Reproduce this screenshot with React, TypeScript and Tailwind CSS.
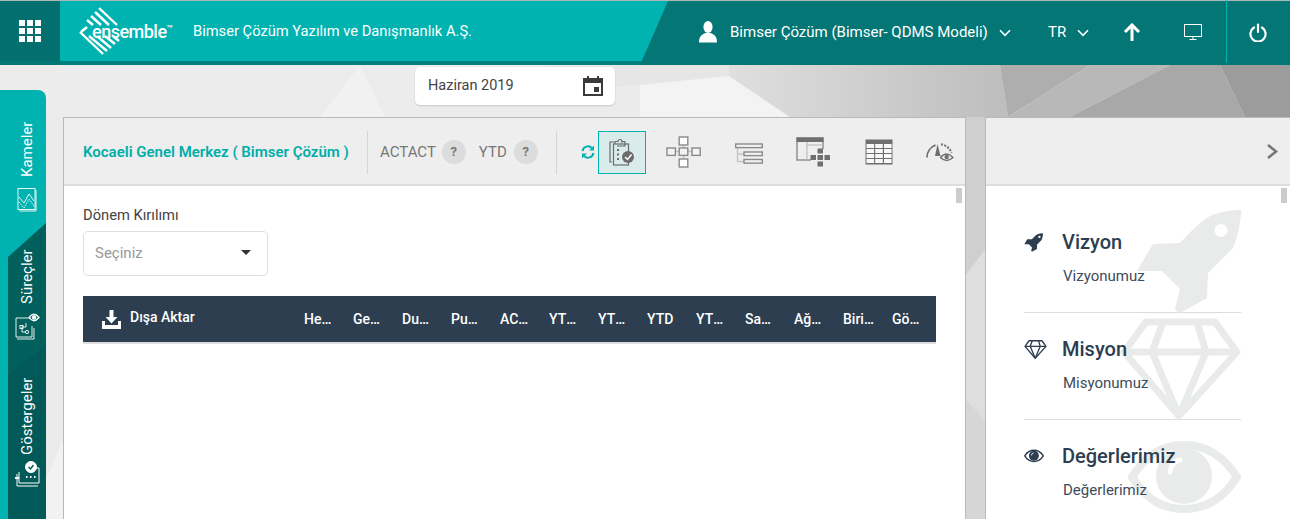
const columns = ["Hedef", "Gerçekleşen", "Durum", "Puan", "ACTACT", "YTD Hedef", "YTD Gerçek", "YTD", "YTD Puan", "Sahip", "Ağırlık", "Birim", "Gösterge"]

function Background() {
  return (
    <svg className="absolute inset-0" width="1290" height="519" viewBox="0 0 1290 519">
      <defs>
        <linearGradient id="mid" x1="0" y1="0" x2="1" y2="0">
          <stop offset="0" stopColor="#dfdfdf" />
          <stop offset="1" stopColor="#bdbdbd" />
        </linearGradient>
      </defs>
      <rect width="1290" height="519" fill="#ebebeb" />
      <polygon points="0,65 640,65 640,85 330,117 0,117" fill="#ececec" />
      <polygon points="320,117 360,65 385,117" fill="#f1f1f1" />
      <polygon points="550,65 729,65 729,76 640,85 560,90" fill="#e6e6e6" />
      <polygon points="640,85 729,76 790,117 640,117" fill="#f3f3f3" />
      <polygon points="729,65 1000,65 1008,117 790,117 729,76" fill="url(#mid)" />
      <polygon points="1000,65 1090,65 1008,117" fill="#aeaeae" />
      <polygon points="1090,65 1170,65 1070,117 1008,117" fill="#b8b8b8" />
      <polygon points="1170,65 1220,65 1245,117 1070,117" fill="#a8a8a8" />
      <polygon points="1220,65 1290,65 1290,117 1245,117" fill="#9c9c9c" />
      <polygon points="966,117 985,117 985,250 966,275" fill="#cfcfcf" />
      <polygon points="966,275 985,250 985,420 966,400" fill="#dedede" />
      <polygon points="966,400 985,420 985,519 966,519" fill="#d6d6d6" />
      <polygon points="46,480 63,440 63,519 46,519" fill="#f2f2f2" />
    </svg>
  )
}

function EnsembleLogo() {
  return (
    <div className="relative w-[94px] h-[48px]">
      <svg width="60" height="48" viewBox="0 0 60 48" className="absolute left-0 top-0" stroke="#ffffff" strokeWidth="2.4">
        <line x1="8" y1="13" x2="14" y2="18" />
        <line x1="12" y1="9" x2="22" y2="18" />
        <line x1="16" y1="5" x2="30" y2="18" />
        <line x1="20" y1="1" x2="38" y2="18" />
        <line x1="2" y1="25" x2="8" y2="20" />
        <line x1="1" y1="25" x2="24" y2="47" />
        <line x1="10" y1="29" x2="28" y2="44" />
        <line x1="18" y1="29" x2="32" y2="41" />
        <line x1="26" y1="29" x2="36" y2="37" />
        <line x1="34" y1="29" x2="40" y2="34" />
      </svg>
      <div className="absolute left-[13px] top-[12px] text-white font-medium text-[18px] leading-[20px] tracking-[-0.5px] whitespace-nowrap">
        ensemble<span className="text-[10px] align-[6px] tracking-normal">™</span>
      </div>
    </div>
  )
}

function Chevron({ className }: { className?: string }) {
  return (
    <svg className={className} width="12" height="8" viewBox="0 0 12 8" fill="none" stroke="#ffffff" strokeWidth="1.6">
      <path d="M1 1.2 L6 6.4 L11 1.2" />
    </svg>
  )
}

function TopBar() {
  return (
    <header className="relative h-[65px] shrink-0 border-t border-[#a9b8b8] bg-[#037675] flex text-white">
      <div className="w-[60px] h-[60px] shrink-0 bg-[#03706f] flex items-center justify-center">
        <div className="grid grid-cols-[6px_6px_6px] gap-[2px] w-[22px]">
          {[0, 1, 2, 3, 4, 5, 6, 7, 8].map((i) => (
            <div key={i} className="w-[6px] h-[6px] bg-white" />
          ))}
        </div>
      </div>
      <div className="w-[608px] h-[64px] shrink-0 bg-[#03807e] [clip-path:polygon(0_0,100%_0,95.4%_100%,0_100%)]">
        <div className="h-[60px] bg-[#00b3b0] flex items-center pl-[19px]">
          <EnsembleLogo />
          <span className="ml-[20px] text-[14.7px] font-normal whitespace-nowrap">Bimser Çözüm Yazılım ve Danışmanlık A.Ş.</span>
        </div>
      </div>
      <div className="flex-1 min-w-0 flex items-center pl-[31px] pb-[2px]">
        <svg className="shrink-0" width="18" height="22" viewBox="0 0 18 22" fill="#ffffff">
          <ellipse cx="9" cy="6" rx="4.6" ry="6" />
          <path d="M0 21.5 C0 15 3 13.5 6.5 12 L11.5 12 C15 13.5 18 15 18 21.5 Z" />
        </svg>
        <span className="ml-[13px] w-[257px] shrink-0 text-[15px] font-normal whitespace-nowrap">Bimser Çözüm (Bimser- QDMS Modeli)</span>
        <Chevron className="ml-[12px] mt-[1px] shrink-0" />
        <span className="ml-[37px] w-[18px] text-[15px] font-normal">TR</span>
        <Chevron className="ml-[11px] mt-[1px] shrink-0" />
        <svg className="ml-[34px] shrink-0" width="18" height="18" viewBox="0 0 18 18" fill="none" stroke="#ffffff" strokeWidth="3">
          <path d="M9 18 V3 M2 9 L9 2 L16 9" />
        </svg>
        <svg className="ml-[43px] shrink-0" width="18" height="17" viewBox="0 0 18 17" fill="none" stroke="#ffffff" strokeWidth="1">
          <rect x="0.5" y="0.5" width="17" height="12" />
          <path d="M9 13 V15.5 M5.5 15.5 H12.5" />
        </svg>
        <div className="ml-[24px] w-px h-[63px] bg-[#00b3b0] -mt-[1px] shrink-0" />
        <svg className="ml-[22px] shrink-0" width="18" height="19" viewBox="0 0 18 19" fill="none" stroke="#ffffff" strokeWidth="2.2" strokeLinecap="round">
          <path d="M9 1.5 V9" />
          <path d="M5 4.5 A7.6 7.6 0 1 0 13 4.5" />
        </svg>
      </div>
    </header>
  )
}

function TabLabel({ label, className }: { label: string; className: string }) {
  return (
    <div className={`[writing-mode:vertical-rl] rotate-180 flex items-center justify-center text-white text-[15px] font-normal leading-none w-[20px] whitespace-nowrap ${className}`}>
      {label}
    </div>
  )
}

function SideTabs() {
  return (
    <aside className="relative w-[46px] h-[429px] mt-[25px] shrink-0 bg-[#00b3b0] rounded-tr-lg overflow-hidden">
      <div className="absolute inset-0 bg-[#015f5c] [clip-path:polygon(8px_167px,46px_133px,46px_429px,8px_429px)]" />
      <div className="absolute inset-0 bg-[#015a58] [clip-path:polygon(8px_285px,46px_255px,46px_429px,8px_429px)]" />
      <div className="relative flex flex-col items-center pl-[8px] pt-[31px]">
        <TabLabel label="Kameler" className="h-[56px]" />
        <svg className="mt-[10px]" width="20" height="25" viewBox="0 0 20 25" fill="none" stroke="#ffffff" strokeWidth="0.9">
          <rect x="1" y="1.5" width="17" height="21" />
          <path d="M2.5 24 H19 V3" />
          <path d="M2 10 L7 16 L12 7 L17 14" />
          <path d="M2 15 L7 21 L12 12 L17 19" strokeDasharray="1.5 1" />
        </svg>
        <TabLabel label="Süreçler" className="h-[54px] mt-[38px]" />
        <svg className="mt-[8px]" width="26" height="28" viewBox="0 0 26 28" fill="none" stroke="#ffffff" strokeWidth="0.9">
          <path d="M17 6 H2 V25 H18 V14" />
          <path d="M3 27 H20 V16" />
          <path d="M8 15 H12 V11 M8 15 V20 H12" />
          <rect x="6" y="13.5" width="3" height="3" />
          <circle cx="13" cy="20" r="1.6" />
          <path d="M15 5.5 Q19.5 -1 25 5.5 Q19.5 12 15 5.5 Z" strokeWidth="1.3" />
          <circle cx="20" cy="5.5" r="1.8" fill="#ffffff" />
        </svg>
        <TabLabel label="Göstergeler" className="h-[78px] mt-[37px]" />
        <svg className="mt-[6px]" width="27" height="27" viewBox="0 0 27 27" fill="none" stroke="#ffffff" strokeWidth="1">
          <path d="M5 11 V22 H25 V7 H19" />
          <path d="M3 13 V25 H24" />
          <path d="M1 17 H5" strokeWidth="2" />
          <circle cx="17" cy="6" r="5.5" fill="#ffffff" />
          <path d="M14.5 6 L16.5 8 L19.5 4" stroke="#015a58" strokeWidth="1.4" />
          <path d="M12 16 H13.5 M16 16 H17.5 M20 16 H21.5" strokeWidth="1.8" />
        </svg>
      </div>
    </aside>
  )
}

function HelpBadge() {
  return (
    <span className="w-[24px] h-[24px] rounded-full bg-[#dcdcdc] flex items-center justify-center text-[#777777] text-[13px] font-bold">?</span>
  )
}

function ClipboardIcon() {
  return (
    <svg width="26" height="29" viewBox="0 0 26 29" fill="none" stroke="#6b6b6b" strokeWidth="1.2">
      <path d="M3 24 H1 V4 H5 M12 4 H14" />
      <rect x="4.5" y="6" width="15" height="21" fill="#d9ebeb" />
      <path d="M6 6 V3.5 H9 A2 2 0 0 1 13 3.5 H16 V8 H8" />
      <path d="M8 12 H10 M8 16.5 H10 M8 21 H10" strokeWidth="1.8" />
      <circle cx="19" cy="19" r="6" fill="#6b6b6b" stroke="none" />
      <path d="M16 19 L18.5 21.5 L22.5 16.5" stroke="#ffffff" strokeWidth="1.5" />
    </svg>
  )
}

function OrgIcon() {
  return (
    <svg width="35" height="32" viewBox="0 0 35 32" fill="#ffffff" stroke="#8a8a8a" strokeWidth="1.4">
      <path d="M17.5 9 V23 M9 15.5 H26" stroke="#c4c4c4" />
      <rect x="13.2" y="1" width="8.6" height="8" />
      <rect x="1" y="12" width="8.4" height="7.4" fill="#f3f3f3" />
      <rect x="13.2" y="12" width="8.6" height="7.4" fill="#f3f3f3" />
      <rect x="26" y="12" width="8.2" height="7.4" fill="#f3f3f3" />
      <rect x="13.2" y="23" width="8.6" height="8" />
    </svg>
  )
}

function TreeIcon() {
  return (
    <svg width="28" height="22" viewBox="0 0 28 22" fill="#f3f3f3" stroke="#8a8a8a" strokeWidth="1.4">
      <path d="M2.5 5 V18.5 H10 M2.5 11 H10" stroke="#c4c4c4" fill="none" />
      <rect x="0.7" y="1" width="26.6" height="3.6" />
      <rect x="9" y="9" width="18.3" height="3.6" />
      <rect x="9" y="16.5" width="18.3" height="3.6" />
    </svg>
  )
}

function TableGridIcon() {
  return (
    <svg width="35" height="30" viewBox="0 0 35 30" fill="none">
      <rect x="1" y="1" width="26" height="22" stroke="#8a8a8a" strokeWidth="1.4" />
      <rect x="0.5" y="0.5" width="27" height="4.5" fill="#6f6f6f" />
      <path d="M11 5 V23" stroke="#b5b5b5" />
      <path d="M11 8 H27" stroke="#b5b5b5" />
      <rect x="15" y="12" width="13" height="12" fill="#f0f0f0" />
      <g fill="#6f6f6f">
        <rect x="21.5" y="11.5" width="5.5" height="5" />
        <rect x="14.5" y="18" width="5.5" height="5" />
        <rect x="21.5" y="18" width="5.5" height="5" />
        <rect x="28.5" y="18" width="5.5" height="5" />
        <rect x="21.5" y="24.5" width="5.5" height="5" />
      </g>
    </svg>
  )
}

function TableIcon() {
  return (
    <svg width="28" height="26" viewBox="0 0 28 26" fill="#f8f8f8">
      <rect x="0.5" y="0.5" width="27" height="25" fill="#6f6f6f" />
      <g>
        {[5, 10, 15, 20].map((y) =>
          [1.5, 10.2, 19].map((x) => <rect key={`${x}-${y}`} x={x} y={y} width="7.6" height="4" />),
        )}
      </g>
    </svg>
  )
}

function GaugeEyeIcon() {
  return (
    <svg width="29" height="22" viewBox="0 0 29 22" fill="none" stroke="#6f6f6f">
      <path d="M2 15.5 A13 13 0 0 1 10.5 3.2" strokeWidth="1.8" />
      <path d="M12.5 2 L10 14 L15.5 14 Z" fill="#6f6f6f" stroke="none" />
      <path d="M16 2.2 A13 13 0 0 1 26.5 11" strokeWidth="2" strokeDasharray="2 1.4" />
      <path d="M15.5 15.5 Q21.5 8.5 28 15.5 Q21.5 21.5 15.5 15.5 Z" strokeWidth="1.3" />
      <circle cx="21.7" cy="15" r="2.2" fill="#6f6f6f" stroke="none" />
    </svg>
  )
}

function RefreshIcon() {
  return (
    <svg width="14" height="14" viewBox="0 0 14 14" fill="none" stroke="#00b3b0" strokeWidth="2">
      <path d="M1.5 6 A5.5 5.5 0 0 1 11 3.2" />
      <path d="M12.5 8 A5.5 5.5 0 0 1 3 10.8" />
      <path d="M13 0.5 V5.5 H8 Z M1 13.5 V8.5 H6 Z" fill="#00b3b0" stroke="none" />
    </svg>
  )
}

function MainPanel() {
  return (
    <section className="relative w-[903px] h-[402px] shrink-0 bg-white border-l border-t border-r border-[#b9b9b9]">
      <div className="h-[68px] pt-[2px] bg-[#eeeeee] border-b-2 border-[#dddddd] flex items-center pl-[19px]">
        <span className="w-[284px] text-[15px] font-semibold text-[#00ada9] whitespace-nowrap">Kocaeli Genel Merkez ( Bimser Çözüm )</span>
        <div className="w-px h-[43px] bg-[#d5d5d5]" />
        <span className="ml-[12px] text-[15px] text-[#777777]">ACTACT</span>
        <span className="ml-[6px]"><HelpBadge /></span>
        <span className="ml-[13px] text-[15px] text-[#777777]">YTD</span>
        <span className="ml-[7px]"><HelpBadge /></span>
        <div className="ml-[18px] w-px h-[43px] bg-[#d5d5d5]" />
        <span className="ml-[24px]"><RefreshIcon /></span>
        <div className="ml-[3px] w-[48px] h-[43px] bg-[#d9ebeb] border border-[#00b3b0] flex items-center justify-center">
          <ClipboardIcon />
        </div>
        <div className="ml-[20px]"><OrgIcon /></div>
        <div className="ml-[34px] mt-[4px]"><TreeIcon /></div>
        <div className="ml-[33px]"><TableGridIcon /></div>
        <div className="ml-[34px]"><TableIcon /></div>
        <div className="ml-[32px] mt-[2px]"><GaugeEyeIcon /></div>
      </div>
      <div className="absolute right-[3px] top-[70px] w-[6px] h-[15px] bg-[#cccccc]" />
      <div className="pl-[19px] pr-[29px] pt-[19px]">
        <div className="text-[14.7px] leading-[20px] text-[#444444]">Dönem Kırılımı</div>
        <div className="mt-[6px] w-[185px] h-[45px] border border-[#dddddd] rounded-[5px] flex items-center pl-[11px] pr-[16px]">
          <span className="text-[15px] text-[#999999]">Seçiniz</span>
          <span className="ml-auto mb-[3px] w-0 h-0 border-x-[5px] border-x-transparent border-t-[5px] border-t-[#333333]" />
        </div>
        <div className="mt-[20px] h-[48px] bg-[#2c3e50] border-b-2 border-[#dddddd] flex items-center text-white text-[14px] font-medium">
          <svg className="ml-[19px]" width="19" height="19" viewBox="0 0 19 19" fill="#ffffff">
            <path d="M7.5 0 H11.5 V7 H15.5 L9.5 13.5 L3.5 7 H7.5 Z" />
            <path d="M0 11 H3 V15 H16 V11 H19 V19 H0 Z" />
          </svg>
          <span className="ml-[9px] w-[174px] -mt-[3px]">Dışa Aktar</span>
          <div className="flex gap-[19px]">
            {columns.map((col) => (
              <span key={col} className={col === "Birim" ? "w-[32px] -mr-[2px] truncate" : "w-[30px] truncate"}>{col}</span>
            ))}
          </div>
        </div>
      </div>
    </section>
  )
}

function RocketIcon({ className }: { className: string }) {
  return (
    <svg className={className} viewBox="0 0 106 103" fill="currentColor" fillRule="evenodd">
      <path d="M106 0 C95 0 84 2 75 6 C63 13 54 24 45 33 L18 34 L2 61 L27 61 L45 79 L40 98 Q42 104 47 102 L72 88 L73 63 L98 38 C103 26 106 12 106 0 Z M86 14 A6.3 6.3 0 1 0 86 27 A6.3 6.3 0 1 0 86 14 Z" />
    </svg>
  )
}

function GemIcon({ className }: { className: string }) {
  return (
    <svg className={className} viewBox="0 0 121 102" fill="none" stroke="currentColor" strokeWidth="7" strokeLinejoin="round">
      <path d="M26 4 H95 L117 34 L59 98 L4 34 Z" />
      <path d="M4 34 H117 M43 4 L32 34 L59 98 M77 4 L86 34 L59 98" />
    </svg>
  )
}

function EyeIcon({ className }: { className: string }) {
  return (
    <svg className={className} viewBox="0 0 113 75" fill="none" stroke="currentColor" strokeWidth="8">
      <path d="M4 37 C18 15 34 5 56 5 C78 5 95 15 109 37 C95 59 78 69 56 69 C34 69 18 59 4 37 Z" />
      <circle cx="56" cy="36" r="28" fill="currentColor" stroke="none" />
      <path d="M42 32 Q43 22 52 20" stroke="#ffffff" strokeWidth="5" strokeLinecap="round" />
    </svg>
  )
}

const cards = [
  { title: "Vizyon", text: "Vizyonumuz", Icon: RocketIcon, big: "w-[106px] h-[103px] top-[4px]", small: "w-[19px] h-[19px]" },
  { title: "Misyon", text: "Misyonumuz", Icon: GemIcon, big: "w-[121px] h-[102px] top-[5px]", small: "w-[23px] h-[19px]" },
  { title: "Değerlerimiz", text: "Değerlerimiz", Icon: EyeIcon, big: "w-[113px] h-[75px] top-[20px]", small: "w-[20px] h-[14px]" },
]

function InfoPanel() {
  return (
    <section className="relative flex-1 h-[402px] bg-white border-l border-t border-[#b9b9b9]">
      <div className="h-[68px] bg-[#eeeeee] border-b-2 border-[#dddddd] flex items-center justify-end pr-[11px]">
        <svg width="13" height="15" viewBox="0 0 13 15" fill="none" stroke="#777777" strokeWidth="2.6">
          <path d="M2 1 L10 7.5 L2 14" />
        </svg>
      </div>
      <div className="absolute right-[3px] top-[70px] w-[6px] h-[15px] bg-[#cccccc]" />
      <div className="pl-[38px] pr-[49px] pt-[20px]">
        {cards.map(({ title, text, Icon, big, small }, i) => (
          <div key={title} className={`relative h-[107px] ${i < 2 ? "border-b border-[#dddddd]" : ""}`}>
            <Icon className={`absolute right-0 text-[#e9ebea] ${big}`} />
            <div className="relative flex items-center h-[56px] pt-[16px]">
              <span className="w-[38px] text-[#2c3e50]"><Icon className={small} /></span>
              <span className="text-[20px] font-medium text-[#2c3e50]">{title}</span>
            </div>
            <div className="relative ml-[39px] mt-[3px] text-[15px] leading-[22px] text-[#3d4b5a]">{text}</div>
          </div>
        ))}
      </div>
    </section>
  )
}

export default function App() {
  return (
    <div className="relative w-[1290px] h-[519px] overflow-hidden flex flex-col font-['Roboto',sans-serif]">
      <Background />
      <TopBar />
      <div className="relative flex">
        <SideTabs />
        <main className="ml-[17px] flex-1 min-w-0">
          <div className="ml-[352px] mt-[2px] w-[200px] h-[38px] bg-white rounded-[5px] shadow-[0_1px_2px_rgba(0,0,0,0.15)] flex items-center pl-[13px] pr-[11px] text-[14.5px] text-[#444444]">
            Haziran 2019
            <svg className="ml-auto" width="22" height="22" viewBox="0 0 22 22" fill="#3a3a3a">
              <path d="M1 3 H5 V1 H7 V3 H15 V1 H17 V3 H21 V21 H1 Z M3 8 V19 H19 V8 Z" />
              <rect x="12" y="12" width="5" height="5" />
            </svg>
          </div>
          <div className="mt-[12px] flex gap-[19px]">
            <MainPanel />
            <InfoPanel />
          </div>
        </main>
      </div>
    </div>
  )
}
